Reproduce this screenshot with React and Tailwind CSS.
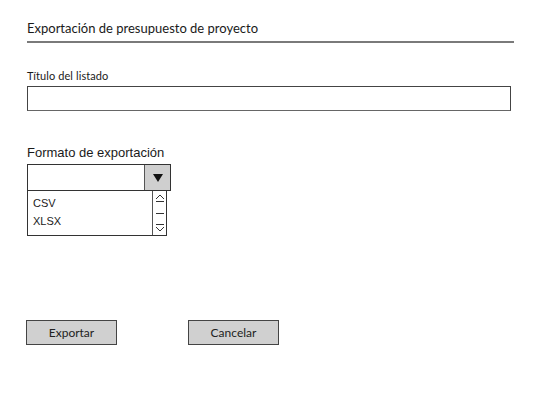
export default function App() {
  return (
    <div className="w-[550px] h-[400px] bg-white pl-[27px] pt-[20px] font-['Lato','Open_Sans',sans-serif] text-[#1a1a1a]">
      {/* Header */}
      <h1 className="text-[13px] leading-[16px]">Exportación de presupuesto de proyecto</h1>
      <div className="mt-[5px] h-[2px] w-[487px] bg-[#7a7a7a]" />

      {/* Título del listado */}
      <label className="block mt-[26px] text-[11px] leading-[13px] tracking-[0.1px]">Título del listado</label>
      <div className="mt-[4px] h-[25px] w-[484px] border border-[#444] border-b-[#666] bg-white" />

      {/* Formato de exportación */}
      <div className="mt-[34px] font-['Liberation_Sans',Arial,sans-serif]">
        <div className="text-[13px] leading-[16px]">Formato de exportación</div>
        <div className="mt-[3px] flex h-[27px] w-[144px] border border-[#333] bg-white">
          <div className="flex-1" />
          <div className="flex w-[26px] items-center justify-center border-l border-[#555] bg-[#cfcfcf]">
            <svg width="10" height="9" viewBox="0 0 10 9">
              <path d="M0 1 H10 L5 9 Z" fill="#111" />
            </svg>
          </div>
        </div>
        <div className="flex h-[45px] w-[140px] border border-t-0 border-[#333] bg-white">
          <ul className="flex-1 pl-[5px] pt-[3px] text-[11px] leading-[18px] text-[#222]">
            <li>CSV</li>
            <li>XLSX</li>
          </ul>
          <div className="flex w-[14px] flex-col items-center justify-between border-l border-[#555] py-[3px]">
            <svg width="10" height="8" viewBox="0 0 10 8">
              <path d="M1 5 L5 1 L9 5" fill="none" stroke="#333" strokeWidth="1" />
              <path d="M1 7.5 H9" stroke="#333" strokeWidth="1" />
            </svg>
            <div className="h-px w-[8px] bg-[#333]" />
            <svg width="10" height="8" viewBox="0 0 10 8">
              <path d="M1 0.5 H9" stroke="#333" strokeWidth="1" />
              <path d="M1 3 L5 7 L9 3" fill="none" stroke="#333" strokeWidth="1" />
            </svg>
          </div>
        </div>
      </div>

      {/* Buttons */}
      <div className="mt-[84px] flex gap-[71px]">
        <button className="-ml-[1px] h-[25px] w-[91px] border border-[#444] bg-[#d0d0d0] text-[12px] text-[#222]">
          Exportar
        </button>
        <button className="h-[25px] w-[91px] border border-[#444] bg-[#d0d0d0] text-[12px] text-[#222]">
          Cancelar
        </button>
      </div>
    </div>
  );
}
